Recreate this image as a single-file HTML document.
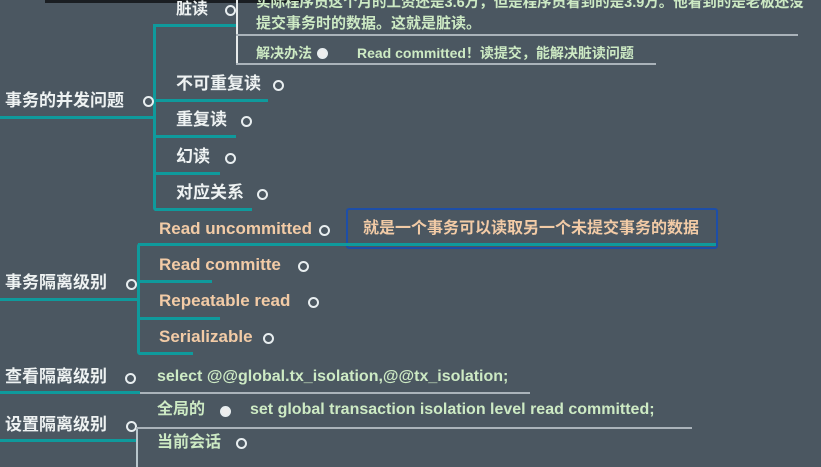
<!DOCTYPE html><html><head><meta charset="utf-8"><style>
body{margin:0;width:821px;height:459px;overflow:hidden;background:#4b5761;position:relative;font-family:"Liberation Sans","Noto Sans CJK SC",sans-serif;font-weight:bold}
.t{position:absolute;font-size:17px;line-height:18px;white-space:nowrap;color:#eef2f2}
.o{color:#f2cba6}.g{color:#cdeac4;font-size:16px}
.d{position:absolute;width:7px;height:7px;border-radius:50%;background:#4b5761;border:2px solid #e8eef0}
.h{position:absolute;height:3px;background:#0f9a9c}
.v{position:absolute;width:3px;background:#0f9a9c}
.gh{position:absolute;height:2px;background:#aab3ba}
.gv{position:absolute;width:2px;background:#e6eaea}
</style></head><body>
<div style="position:absolute;left:45px;top:0;width:255px;height:3px;background:#1a1e22"></div>
<div class="t" style="left:176px;top:1px;font-size:16px">脏读</div><div class="d" style="left:225px;top:5px"></div>
<div class="gv" style="left:236px;top:0;height:64px"></div>
<div class="gh" style="left:236px;top:34px;width:562px"></div>
<div class="gh" style="left:236px;top:63px;width:420px"></div>
<div class="t g" style="left:256px;top:-6px;font-size:14.5px">实际程序员这个月的工资还是3.6万，但是程序员看到的是3.9万。他看到的是老板还没</div>
<div class="t g" style="left:256px;top:15px;font-size:15px">提交事务时的数据。这就是脏读。</div>
<div class="t g" style="left:256px;top:44px;font-size:14px">解决办法</div><div class="d" style="left:317px;top:48px;background:#eee"></div>
<div class="t g" style="left:357px;top:44px;font-size:14px">Read committed！读提交，能解决脏读问题</div>
<div class="v" style="left:153px;top:24px;height:187px;border-radius:6px 0 0 6px"></div>
<div class="h" style="left:153px;top:24px;width:83px"></div>
<div class="h" style="left:0;top:116px;width:155px"></div>
<div class="t" style="left:5px;top:92px">事务的并发问题</div><div class="d" style="left:143px;top:96px"></div>
<div class="t" style="left:176px;top:75px">不可重复读</div><div class="d" style="left:273px;top:80px"></div><div class="h" style="left:155px;top:99px;width:113px"></div>
<div class="t" style="left:176px;top:111px">重复读</div><div class="d" style="left:241px;top:116px"></div><div class="h" style="left:155px;top:135px;width:81px"></div>
<div class="t" style="left:176px;top:148px">幻读</div><div class="d" style="left:225px;top:153px"></div><div class="h" style="left:155px;top:172px;width:65px"></div>
<div class="t" style="left:176px;top:184px">对应关系</div><div class="d" style="left:257px;top:189px"></div><div class="h" style="left:155px;top:208px;width:97px"></div>
<div class="t o" style="left:159px;top:220px">Read uncommitted</div><div class="d" style="left:319px;top:225px"></div>
<div style="position:absolute;left:346px;top:208px;width:368px;height:37px;border:2px solid #1d4ea8;border-radius:3px"></div>
<div class="t o" style="left:363px;top:220px;font-size:16px">就是一个事务可以读取另一个未提交事务的数据</div>
<div class="h" style="left:138px;top:243px;width:578px"></div>
<div class="v" style="left:137px;top:243px;height:112px;border-radius:6px 0 0 6px"></div>
<div class="h" style="left:0;top:298px;width:140px"></div>
<div class="t" style="left:5px;top:274px">事务隔离级别</div><div class="d" style="left:126px;top:279px"></div>
<div class="t o" style="left:159px;top:256px">Read committe</div><div class="d" style="left:298px;top:261px"></div><div class="h" style="left:139px;top:280px;width:73px"></div>
<div class="t o" style="left:159px;top:292px">Repeatable read</div><div class="d" style="left:308px;top:297px"></div><div class="h" style="left:139px;top:317px;width:81px"></div>
<div class="t o" style="left:159px;top:328px">Serializable</div><div class="d" style="left:263px;top:333px"></div><div class="h" style="left:139px;top:352px;width:54px"></div>
<div class="t" style="left:5px;top:368px">查看隔离级别</div><div class="d" style="left:125px;top:373px"></div>
<div class="t g" style="left:157px;top:368px">select @@global.tx_isolation,@@tx_isolation;</div>
<div class="h" style="left:0;top:391px;width:140px"></div><div class="gh" style="left:140px;top:392px;width:390px"></div>
<div class="t" style="left:5px;top:416px">设置隔离级别</div><div class="d" style="left:126px;top:421px"></div>
<div class="h" style="left:0;top:439px;width:137px"></div>
<div class="gv" style="left:136px;top:427px;height:40px;background:#b8c6cc"></div>
<div class="gh" style="left:136px;top:427px;width:556px"></div>
<div class="t g" style="left:157px;top:401px">全局的</div><div class="d" style="left:220px;top:406px;background:#eee"></div>
<div class="t g" style="left:250px;top:401px">set global transaction isolation level read committed;</div>
<div class="t g" style="left:157px;top:434px">当前会话</div><div class="d" style="left:236px;top:438px"></div>
</body></html>
